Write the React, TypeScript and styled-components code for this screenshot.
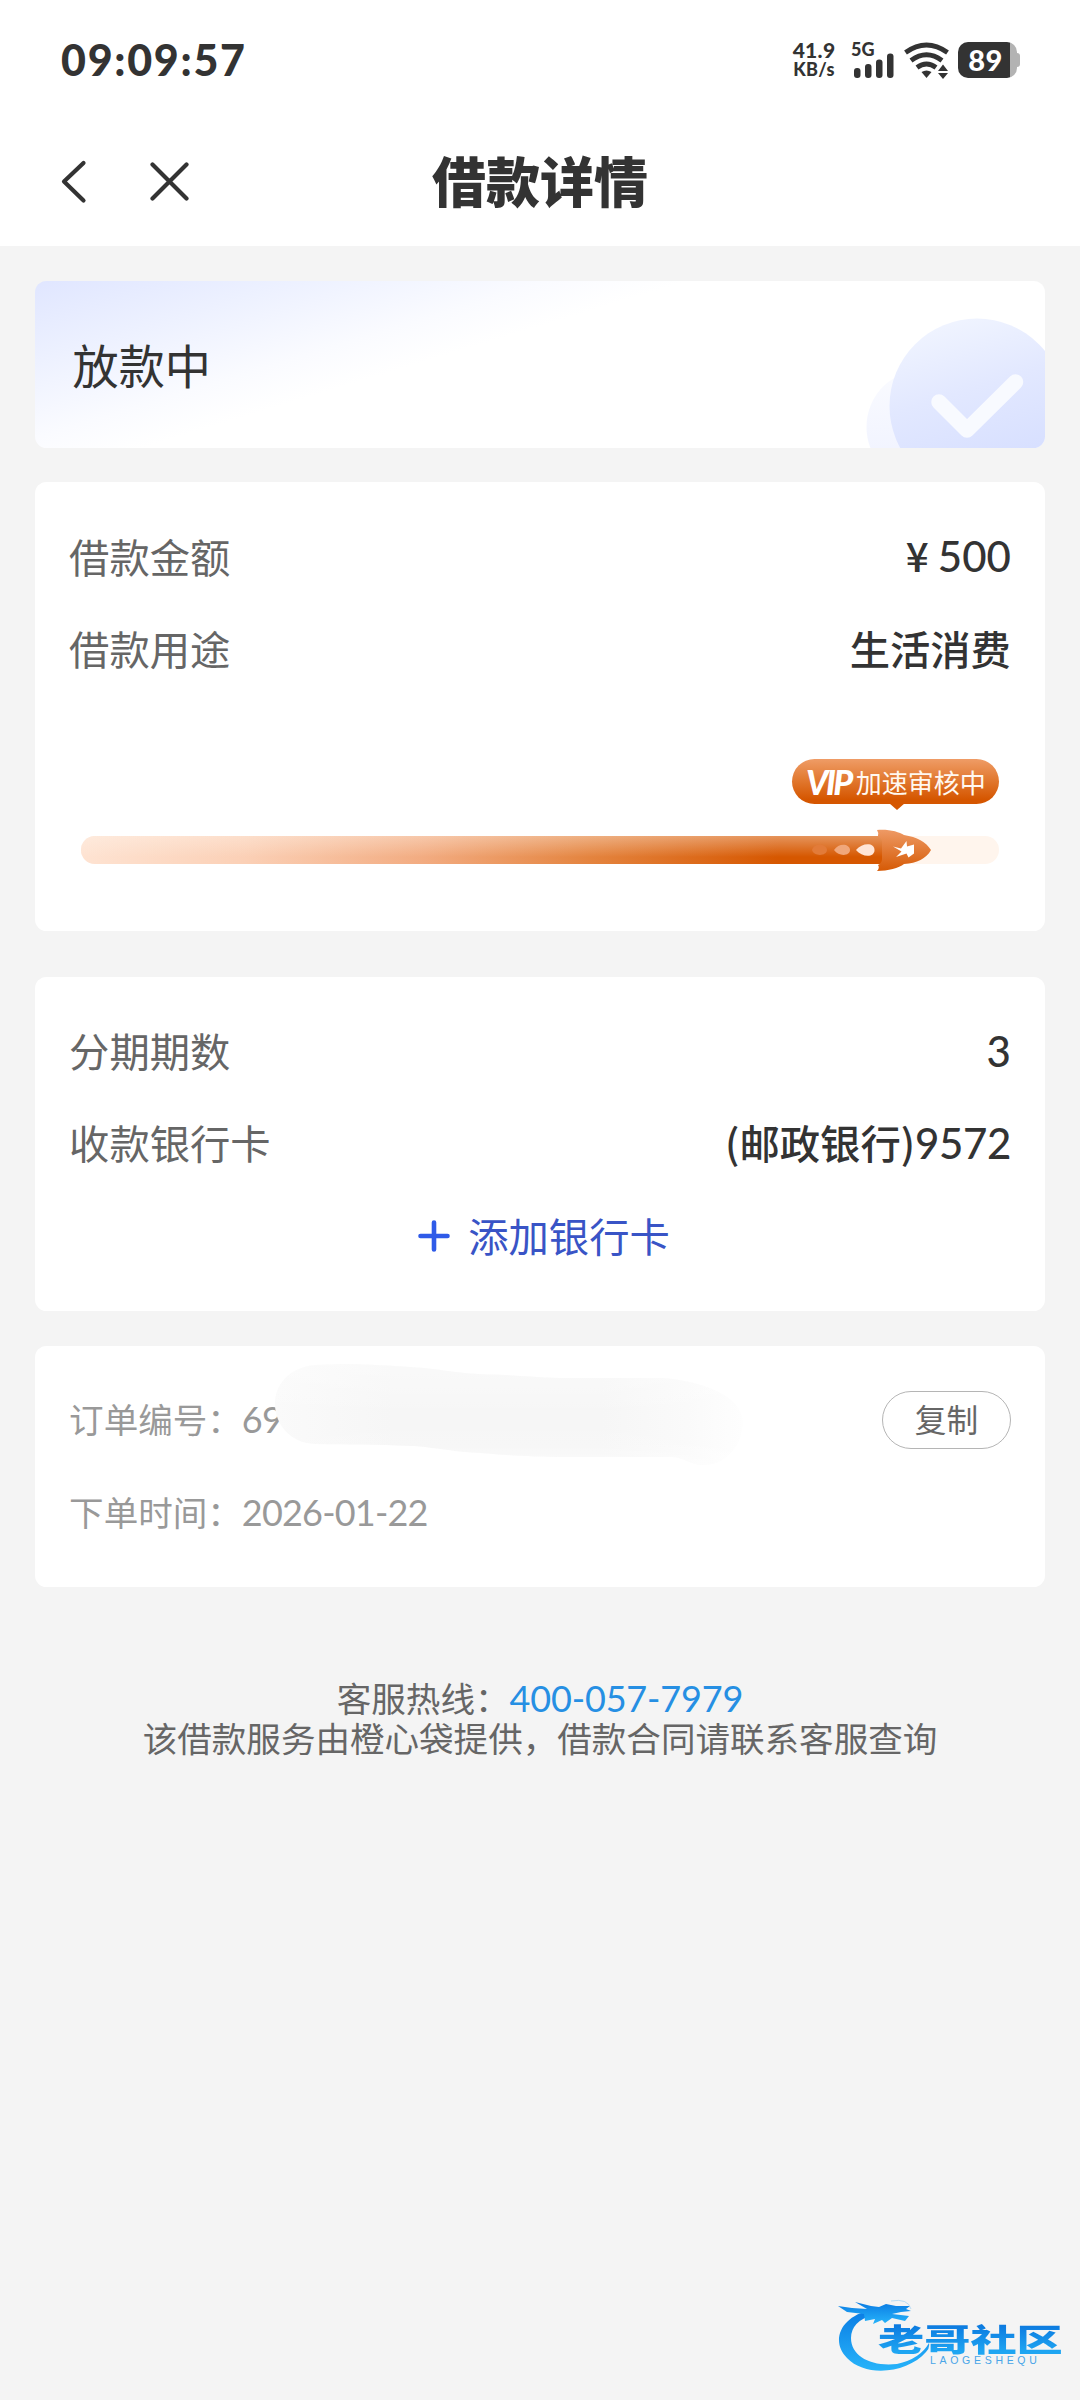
import React from "react";
import styled, { createGlobalStyle } from "styled-components";

const cjk = `"Noto Sans CJK SC", "Noto Sans", sans-serif`;
const latin = `Lato, "Noto Sans CJK SC", sans-serif`;

const GlobalStyle = createGlobalStyle`
  * { box-sizing: border-box; }
  body { margin: 0; background: #f4f4f4; }
`;

const Page = styled.div`
  position: relative;
  width: 1080px;
  height: 2400px;
  overflow: hidden;
  background: #f4f4f4;
  color: #333;
  font-family: ${cjk};
`;

const Header = styled.header`
  height: 246px;
  background: #fff;
`;

const StatusBar = styled.div`
  display: flex;
  align-items: center;
  height: 120px;
  padding: 0 60px 0 61px;
`;

const Clock = styled.div`
  flex: 1;
  font: 900 43px/60px ${latin};
  letter-spacing: 1.7px;
`;

const NetSpeed = styled.div`
  display: flex;
  flex-direction: column;
  align-items: center;
  width: 44px;
  margin-right: 15px;
  padding-bottom: 2px;
  font: 900 21px/20px ${latin};
  letter-spacing: 0.3px;
`;

const SpeedUnit = styled.span`
  font-size: 18px;
  line-height: 19px;
`;

const Signal = styled.div`
  position: relative;
  width: 44px;
  height: 38px;
  margin-right: 9px;
`;

const SignalLabel = styled.span`
  position: absolute;
  left: 0;
  top: 0;
  font: 900 18px/16px ${latin};
`;

const StatusSvg = styled.svg`
  display: block;
`;

const Battery = styled.div`
  display: flex;
  align-items: center;
  margin-left: 9px;
`;

const BatteryBody = styled.div`
  width: 59px;
  height: 36px;
  padding-right: 4px;
  border-radius: 10px;
  background: linear-gradient(90deg, #333 52px, #b3b3b3 52px);
  color: #fff;
  font: 900 29px/36px ${latin};
  letter-spacing: 0.5px;
  text-align: center;
`;

const BatteryTip = styled.div`
  width: 3px;
  height: 14px;
  border-radius: 0 4px 4px 0;
  background: #b3b3b3;
`;

const NavBar = styled.nav`
  display: grid;
  grid-template-columns: 240px 1fr 240px;
  align-items: center;
  height: 123px;
`;

const NavActions = styled.div`
  display: flex;
  padding-left: 60px;
  gap: 62px;
`;

const Title = styled.h1`
  margin: 0;
  padding-bottom: 3px;
  font-size: 54px;
  font-weight: 900;
  line-height: 70px;
  text-align: center;
`;

const Main = styled.main`
  display: flex;
  flex-direction: column;
  padding: 34.56px 34.56px 0;
`;

const StatusCard = styled.section`
  position: relative;
  display: flex;
  align-items: center;
  height: 167.04px;
  padding: 0 0 0 38px;
  margin-bottom: 34.56px;
  overflow: hidden;
  border-radius: 11.5px;
  background: linear-gradient(163deg, #e0e6ff 0%, #edf1ff 17%, #fafbff 33%, #fff 42%);
  font-size: 46.08px;
`;

const StatusArt = styled.svg`
  position: absolute;
  right: 0;
  bottom: 0;
`;

const Card = styled.section<{ $gap?: number; $height?: number }>`
  position: relative;
  height: ${(p) => (p.$height ? `${p.$height}px` : "auto")};
  padding: 28.8px 34.56px;
  margin-bottom: ${(p) => p.$gap ?? 34.56}px;
  border-radius: 11.5px;
  background: #fff;
`;

const Row = styled.div<{ $small?: boolean }>`
  display: flex;
  align-items: center;
  justify-content: space-between;
  height: 92.16px;
  padding-bottom: 3px;
  color: ${(p) => (p.$small ? "#999" : "#666")};
  font-size: ${(p) => (p.$small ? 34.56 : 40.32)}px;
  line-height: 58px;
`;

const Value = styled.span`
  color: #333;
  font-weight: 500;
`;

const Num = styled.span<{ $size: number; $spacing?: number }>`
  font-family: ${latin};
  font-size: ${(p) => p.$size}px;
  letter-spacing: ${(p) => p.$spacing ?? 0}px;
`;

const Yen = styled.span`
  margin-right: 9px;
`;

const VipBlock = styled.div`
  display: flex;
  flex-direction: column;
  padding: 64px 11.5px 0;
`;

const VipPill = styled.div`
  position: relative;
  display: flex;
  align-items: center;
  justify-content: center;
  align-self: flex-end;
  width: 207px;
  height: 45px;
  border-radius: 23px;
  background: linear-gradient(180deg, #ef9c66 0%, #e27a32 45%, #d55600 90%);
  color: #fff8f0;
  font-size: 26px;
  line-height: 38px;

  &::after {
    content: "";
    position: absolute;
    left: 97px;
    top: 44px;
    border: 8px solid transparent;
    border-top: 7px solid #d55600;
    border-bottom: 0;
  }
`;

const VipMark = styled.span`
  margin-right: 5px;
  color: #fff;
  font: italic 900 34px/38px ${latin};
  letter-spacing: -2.5px;
`;

const Track = styled.div`
  position: relative;
  height: 28px;
  margin-top: 32px;
  border-radius: 14px;
  background: #fff5ed;
`;

const Fill = styled.div`
  width: 820px;
  height: 28px;
  border-radius: 14px 0 0 14px;
  background:
    linear-gradient(180deg, rgba(255, 246, 238, 0.38), rgba(255, 255, 255, 0) 75%),
    linear-gradient(90deg, #fee3d2 0%, #fbd0b6 20%, #f2ab80 42%, #e4843f 62%, #d65700 85%);
`;

const Rocket = styled.svg`
  position: absolute;
  left: 729px;
  top: -7px;
`;

const AddCard = styled.button`
  display: flex;
  align-items: center;
  justify-content: center;
  width: 100%;
  height: 92.16px;
  padding: 0 0 0 8px;
  gap: 18px;
  border: 0;
  background: none;
  color: #3954c6;
  font: 400 40.32px/58px ${cjk};
`;

const AddLabel = styled.span`
  padding-bottom: 3px;
`;

const CopyButton = styled.button`
  width: 129px;
  height: 58px;
  margin-top: 3px;
  padding: 0 0 4px;
  border: 1px solid #b5b5b5;
  border-radius: 29px;
  background: #fff;
  color: #666;
  font: 400 31.68px/50px ${cjk};
`;

const Smear = styled.svg`
  position: absolute;
  left: 237px;
  top: 16px;
`;

const Footer = styled.footer`
  padding-top: 55px;
  color: #666;
  font-size: 34.56px;
  line-height: 40px;
  text-align: center;
`;

const FooterLine = styled.div`
  height: 40px;
`;

const Hotline = styled.a`
  color: #268fe3;
`;

const Watermark = styled.div`
  position: absolute;
  left: 836px;
  top: 2294px;
  width: 232px;
  height: 82px;
`;

const WatermarkName = styled.div`
  position: absolute;
  left: 42px;
  top: 24px;
  font-size: 31px;
  font-weight: 900;
  line-height: 40px;
  white-space: nowrap;
  color: transparent;
  background: linear-gradient(180deg, #0b78df 15%, #1fa6f2 85%);
  background-clip: text;
  transform: scaleX(1.49);
  transform-origin: 0 0;
`;

const WatermarkLatin = styled.div`
  position: absolute;
  left: 94px;
  top: 60px;
  color: #49a5e8;
  font: 400 10.5px/12px "Liberation Sans", sans-serif;
  letter-spacing: 3.7px;
`;

function SignalBars() {
  return (
    <Signal>
      <SignalLabel>5G</SignalLabel>
      <StatusSvg width="44" height="38" fill="#333">
        <rect x="3" y="27" width="6.5" height="10" rx="3" />
        <rect x="14" y="23" width="6.5" height="14" rx="3" />
        <rect x="25" y="18.5" width="6.5" height="18.5" rx="3" />
        <rect x="36" y="12.5" width="6.5" height="24.5" rx="3" />
      </StatusSvg>
    </Signal>
  );
}

function Wifi() {
  return (
    <StatusSvg width="45" height="37" fill="none" stroke="#333" strokeWidth="4.8">
      <path d="M1.5 10.5Q22.500 -4.500 43.500 10.500" />
      <path d="M7 18.500Q22.500 7 38 18.500" />
      <path d="M13 25.500Q22.500 18.500 32 25.500" />
      <path d="M17.500 30Q22.500 26.800 27.500 30L22.500 36Z" fill="#333" stroke="none" />
      <path d="M34 29L39 22.500L44 29ZM34 31L39 37L44 31Z" fill="#333" stroke="none" />
    </StatusSvg>
  );
}

function RocketIcon() {
  return (
    <Rocket width="124" height="43" viewBox="0 0 124 43">
      <defs>
        <linearGradient id="hull" x1="0" y1="0" x2="0" y2="1">
          <stop offset="0" stopColor="#ee9a65" />
          <stop offset="1" stopColor="#d65a05" />
        </linearGradient>
      </defs>
      <path d="M2 21C4 13 17 15 17 21S4 28 2 21Z" fill="#e27b39" />
      <path d="M24 21C29 13 40 15 40 21S29 28 24 21Z" fill="#f0a77b" />
      <path d="M46 21C52 13.500 64.500 13 64.500 21S52 28.500 46 21Z" fill="#ffe5d6" />
      <path
        d="M67 1C79 0 89 3 94 6C107 8 116 13 121 21C116 30 107 34 94 35C89 39 78 42 67 42Q70 39 68 36Q72 34 72 30V13Q72 9 68 7Q69 4 67 1Z"
        fill="url(#hull)"
      />
      <path d="M83 17.500L91 19.500L96.500 12L97 17.500L104 15.500V24.500L98.500 28.500L96.500 24.500L86 28L91.500 22.500Z" fill="#fff" />
    </Rocket>
  );
}

function CheckArt() {
  return (
    <StatusArt width="180" height="130" viewBox="0 0 180 130">
      <defs>
        <linearGradient id="disc" x1="0.35" y1="0" x2="0.6" y2="0.8">
          <stop offset="0" stopColor="#f0f4ff" />
          <stop offset="0.5" stopColor="#e2e8ff" />
          <stop offset="1" stopColor="#d8e0ff" />
        </linearGradient>
        <linearGradient id="halo" x1="0" y1="0" x2="0" y2="1">
          <stop offset="0" stopColor="#fafbff" />
          <stop offset="1" stopColor="#eef1ff" />
        </linearGradient>
      </defs>
      <circle cx="59" cy="109" r="57.500" fill="url(#halo)" />
      <circle cx="112" cy="88" r="87.500" fill="url(#disc)" />
      <path
        d="M74 84L102 112L150.500 64"
        fill="none"
        stroke="#f8faff"
        strokeWidth="15.500"
        strokeLinecap="round"
        strokeLinejoin="round"
      />
    </StatusArt>
  );
}

function DragonMark() {
  return (
    <svg width="232" height="82" viewBox="0 0 232 82">
      <defs>
        <linearGradient id="dragon" x1="0" y1="0" x2="0" y2="1">
          <stop offset="0" stopColor="#0a7be3" />
          <stop offset="1" stopColor="#27b4fa" />
        </linearGradient>
      </defs>
      <g fill="url(#dragon)">
        <path d="M35 16C5 22-6 47 11 64C30 84 72 79 90 58Q94 54 93 49Q84 65 61 70C35 73 15 62 15 44Q15 27 39 20Z" />
        <path d="M2 12L16 14L31 15L19 8L35 12L43 13L50 10L60 12L74 12L70 15L75 17L65 18L56 20L73 22L69 27L56 24L49 29L46 26L37 30L39 25L29 27L28 20L11 18Z" />
      </g>
      <path d="M55 7Q72 4 75 15" fill="none" stroke="#9fd0f2" strokeWidth="0.7" />
    </svg>
  );
}

function RedactedArea() {
  return (
    <Smear width="474" height="106" viewBox="0 0 474 106">
      <defs>
        <linearGradient id="smearX" x1="0" y1="0" x2="1" y2="0">
          <stop offset="0" stopColor="#fafafa" />
          <stop offset="0.25" stopColor="#f6f6f6" />
          <stop offset="0.7" stopColor="#f6f6f6" />
          <stop offset="0.88" stopColor="#fafafa" />
          <stop offset="1" stopColor="#fefefe" />
        </linearGradient>
        <linearGradient id="smearY" x1="0" y1="0" x2="0" y2="1">
          <stop offset="0" stopColor="#fff" stopOpacity="0.4" />
          <stop offset="0.5" stopColor="#fff" stopOpacity="0" />
          <stop offset="0.8" stopColor="#fff" stopOpacity="0.1" />
          <stop offset="1" stopColor="#fff" stopOpacity="0.5" />
        </linearGradient>
      </defs>
      {["url(#smearX)", "url(#smearY)"].map((fill) => (
        <path
          key={fill}
          fill={fill}
          d="M43 3C80 1 110 3 138 5C170 7 180 11 215 12.500C250 13 265 16 296 16L389 16C425 18 470 32 471 60C470 88 450 103 432 103C418 103 412 95 399 95L296 95C250 95 225 92 193 90C165 87 150 84 138 84C105 82 75 83 43 82C18 81 3 62 3 42C3 22 18 5 43 3Z"
        />
      ))}
    </Smear>
  );
}

export default function App() {
  return (
    <Page>
      <GlobalStyle />
      <Header>
        <StatusBar>
          <Clock>09:09:57</Clock>
          <NetSpeed>
            <span>41.9</span>
            <SpeedUnit>KB/s</SpeedUnit>
          </NetSpeed>
          <SignalBars />
          <Wifi />
          <Battery>
            <BatteryBody>89</BatteryBody>
            <BatteryTip />
          </Battery>
        </StatusBar>
        <NavBar>
          <NavActions>
            <svg width="28" height="46" fill="none" stroke="#333" strokeWidth="4.200" strokeLinecap="round" strokeLinejoin="round">
              <path d="M23.500 4L4 22.500L23.500 41.500" />
            </svg>
            <svg width="40" height="46" fill="none" stroke="#333" strokeWidth="4.200" strokeLinecap="round">
              <path d="M2.500 5.500L36.500 39.500M36.500 5.500L2.500 39.500" />
            </svg>
          </NavActions>
          <Title>借款详情</Title>
        </NavBar>
      </Header>

      <Main>
        <StatusCard>
          放款中
          <CheckArt />
        </StatusCard>

        <Card $height={448.8} $gap={46}>
          <Row>
            <span>借款金额</span>
            <Value>
              <Yen>¥</Yen>
              <Num $size={42}>500</Num>
            </Value>
          </Row>
          <Row>
            <span>借款用途</span>
            <Value>生活消费</Value>
          </Row>
          <VipBlock>
            <VipPill>
              <VipMark>VIP</VipMark>
              加速审核中
            </VipPill>
            <Track>
              <Fill />
              <RocketIcon />
            </Track>
          </VipBlock>
        </Card>

        <Card>
          <Row>
            <span>分期期数</span>
            <Value>
              <Num $size={42}>3</Num>
            </Value>
          </Row>
          <Row>
            <span>收款银行卡</span>
            <Value>
              (邮政银行)<Num $size={42} $spacing={-0.4}>9572</Num>
            </Value>
          </Row>
          <AddCard>
            <svg width="32" height="32" stroke="#2f5be8" strokeWidth="4.600" strokeLinecap="round">
              <path d="M16 2.500V29.500M2.500 16H29.500" />
            </svg>
            <AddLabel>添加银行卡</AddLabel>
          </AddCard>
        </Card>

        <Card>
          <Row $small>
            <span>
              订单编号：<Num $size={36} $spacing={-0.7}>69</Num>
            </span>
            <CopyButton>复制</CopyButton>
          </Row>
          <Row $small>
            <span>
              下单时间：<Num $size={36} $spacing={-0.8}>2026-01-22</Num>
            </span>
          </Row>
          <RedactedArea />
        </Card>

        <Footer>
          <FooterLine>
            客服热线：
            <Hotline>
              <Num $size={36} $spacing={-0.15}>400-057-7979</Num>
            </Hotline>
          </FooterLine>
          <FooterLine>该借款服务由橙心袋提供，借款合同请联系客服查询</FooterLine>
        </Footer>
      </Main>

      <Watermark>
        <DragonMark />
        <WatermarkName>老哥社区</WatermarkName>
        <WatermarkLatin>LAOGESHEQU</WatermarkLatin>
      </Watermark>
    </Page>
  );
}
